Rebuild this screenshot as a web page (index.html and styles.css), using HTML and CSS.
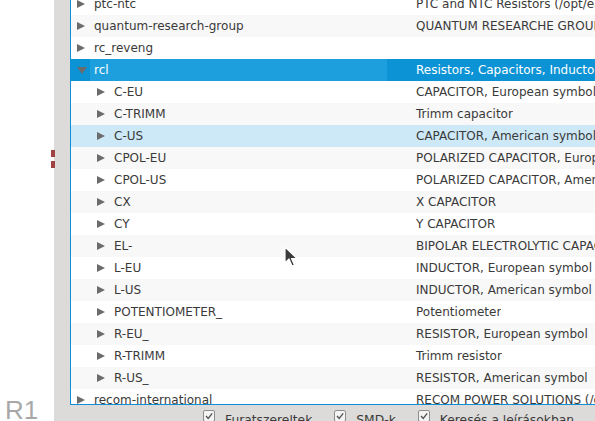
FILE: index.html
```html
<!DOCTYPE html>
<html lang="hu">
<head>
  <meta charset="UTF-8">
  <meta name="viewport" content="width=device-width, initial-scale=1.0">
  <title>Alkatrész könyvtár</title>
  <link rel="stylesheet" href="styles.css">
</head>
<body>
  <div class="app">
    <div class="canvas">
      <span class="pin pin-a"></span>
      <span class="pin pin-b"></span>
      <div class="ref">R1</div>
    </div>
    <div class="strip"></div>
    <div class="panel">
      <div class="tree">
        <div class="rows">
          <div class="row"><div class="name"><span class="tog"><i class="tri"></i></span><span class="label">ptc-ntc</span></div><div class="desc">PTC and NTC Resistors (/opt/eagle/lbr/ptc-ntc.lbr)</div></div>
          <div class="row alt"><div class="name"><span class="tog"><i class="tri"></i></span><span class="label">quantum-research-group</span></div><div class="desc">QUANTUM RESEARCHE GROUP</div></div>
          <div class="row"><div class="name"><span class="tog"><i class="tri"></i></span><span class="label">rc_reveng</span></div><div class="desc"></div></div>
          <div class="row selected"><div class="name"><span class="tog"><i class="tri open"></i></span><span class="label">rcl</span></div><div class="desc">Resistors, Capacitors, Inductors</div></div>
          <div class="row child"><div class="name"><span class="tog"><i class="tri"></i></span><span class="label">C-EU</span></div><div class="desc">CAPACITOR, European symbol</div></div>
          <div class="row child alt"><div class="name"><span class="tog"><i class="tri"></i></span><span class="label">C-TRIMM</span></div><div class="desc">Trimm capacitor</div></div>
          <div class="row child hover"><div class="name"><span class="tog"><i class="tri"></i></span><span class="label">C-US</span></div><div class="desc">CAPACITOR, American symbol</div></div>
          <div class="row child alt"><div class="name"><span class="tog"><i class="tri"></i></span><span class="label">CPOL-EU</span></div><div class="desc">POLARIZED CAPACITOR, European symbol</div></div>
          <div class="row child"><div class="name"><span class="tog"><i class="tri"></i></span><span class="label">CPOL-US</span></div><div class="desc">POLARIZED CAPACITOR, American symbol</div></div>
          <div class="row child alt"><div class="name"><span class="tog"><i class="tri"></i></span><span class="label">CX</span></div><div class="desc">X CAPACITOR</div></div>
          <div class="row child"><div class="name"><span class="tog"><i class="tri"></i></span><span class="label">CY</span></div><div class="desc">Y CAPACITOR</div></div>
          <div class="row child alt"><div class="name"><span class="tog"><i class="tri"></i></span><span class="label">EL-</span></div><div class="desc">BIPOLAR ELECTROLYTIC CAPACITOR</div></div>
          <div class="row child"><div class="name"><span class="tog"><i class="tri"></i></span><span class="label">L-EU</span></div><div class="desc">INDUCTOR, European symbol</div></div>
          <div class="row child alt"><div class="name"><span class="tog"><i class="tri"></i></span><span class="label">L-US</span></div><div class="desc">INDUCTOR, American symbol</div></div>
          <div class="row child"><div class="name"><span class="tog"><i class="tri"></i></span><span class="label">POTENTIOMETER_</span></div><div class="desc">Potentiometer</div></div>
          <div class="row child alt"><div class="name"><span class="tog"><i class="tri"></i></span><span class="label">R-EU_</span></div><div class="desc">RESISTOR, European symbol</div></div>
          <div class="row child"><div class="name"><span class="tog"><i class="tri"></i></span><span class="label">R-TRIMM</span></div><div class="desc">Trimm resistor</div></div>
          <div class="row child alt"><div class="name"><span class="tog"><i class="tri"></i></span><span class="label">R-US_</span></div><div class="desc">RESISTOR, American symbol</div></div>
          <div class="row"><div class="name"><span class="tog"><i class="tri"></i></span><span class="label">recom-international</span></div><div class="desc">RECOM POWER SOLUTIONS (/opt/eagle/lbr/recom-international.lbr)</div></div>
        </div>
        <svg class="cursor" width="14" height="22" viewBox="0 0 14 22">
          <path d="M1 1 L1 17 L5 13 L8 20 L10.5 19 L7.5 12.5 L13 12.5 Z" fill="#3b3b3b" stroke="#fff" stroke-width="1.2" stroke-linejoin="round"/>
        </svg>
      </div>
      <div class="options">
        <label class="opt"><span class="box"><svg width="10" height="10" viewBox="0 0 10 10"><path d="M2 5 L4.2 7.4 L8.2 2.4" fill="none" stroke="#555" stroke-width="1.4"/></svg></span>Furatszereltek</label>
        <label class="opt"><span class="box"><svg width="10" height="10" viewBox="0 0 10 10"><path d="M2 5 L4.2 7.4 L8.2 2.4" fill="none" stroke="#555" stroke-width="1.4"/></svg></span>SMD-k</label>
        <label class="opt"><span class="box"><svg width="10" height="10" viewBox="0 0 10 10"><path d="M2 5 L4.2 7.4 L8.2 2.4" fill="none" stroke="#555" stroke-width="1.4"/></svg></span>Keresés a leírásokban</label>
      </div>
    </div>
  </div>
</body>
</html>
```

FILE: styles.css
```css
* {
  box-sizing: border-box;
}
body {
  margin: 0;
  width: 595px;
  height: 421px;
  overflow: hidden;
  background: #fff;
  font-family: "DejaVu Sans", sans-serif;
  font-size: 12px;
  color: #3a3a3a;
}
.app {
  display: flex;
  height: 421px;
}

/* schematic area on the left */
.canvas {
  position: relative;
  width: 54px;
  flex: none;
  background: #fff;
}
.pin {
  position: absolute;
  left: 51px;
  width: 4px;
  height: 7px;
  background: #a04242;
}
.pin-a { top: 150px; }
.pin-b { top: 161px; }
.ref {
  position: absolute;
  left: 5px;
  bottom: -2px;
  font-family: "Liberation Sans", sans-serif;
  font-size: 26px;
  line-height: 26px;
  color: #a8a8a8;
}
.strip {
  width: 16px;
  flex: none;
  background: #dcdbd9;
}

/* library browser */
.panel {
  flex: 1;
  display: flex;
  flex-direction: column;
  min-width: 0;
  overflow: hidden;
  background: #dcdbd9;
}
.tree {
  position: relative;
  height: 405px;
  flex: none;
  overflow: hidden;
  background: #fff;
  border-left: 1px solid #0f90d6;
  border-bottom: 1px solid #0f90d6;
}
.rows {
  margin-top: -7px;
}
.row {
  display: flex;
  height: 22px;
  line-height: 22px;
  white-space: nowrap;
}
.row.alt { background: #f8f8f8; }
.row.hover { background: #cde8f7; }
.row.selected {
  background: #0b93d5;
  color: #fff;
}
.name {
  display: flex;
  width: 316px;
  flex: none;
}
.child .name { padding-left: 20px; }
.tog {
  width: 19px;
  flex: none;
  position: relative;
}
.tri {
  position: absolute;
  left: 6px;
  top: 7px;
  width: 0;
  height: 0;
  border-left: 8px solid #6b6b6b;
  border-top: 4.5px solid transparent;
  border-bottom: 4.5px solid transparent;
}
.tri.open {
  left: 6px;
  top: 8px;
  border-left: 5px solid transparent;
  border-right: 5px solid transparent;
  border-top: 7px solid #6b6b6b;
  border-bottom: 0;
}
.label {
  flex: 1;
  padding-left: 4px;
  overflow: hidden;
}
.selected .label { background: #1c9fdc; }
.desc {
  padding-left: 29px;
  overflow: hidden;
}
.cursor {
  position: absolute;
  left: 213px;
  top: 246px;
}

/* filter options under the tree */
.options {
  display: flex;
  height: 16px;
  padding: 5px 0 0 133px;
  line-height: 20px;
  white-space: nowrap;
  color: #3a3a3a;
}
.opt {
  display: flex;
  flex: none;
  align-items: flex-start;
  margin-right: 22px;
  font-size: 12.3px;
}
.box {
  display: flex;
  flex: none;
  align-items: center;
  justify-content: center;
  width: 12px;
  height: 12px;
  margin: 0 10px 0 0;
  border: 1px solid #8d8d8d;
  border-radius: 2px;
  background: #f4f4f4;
}
```
